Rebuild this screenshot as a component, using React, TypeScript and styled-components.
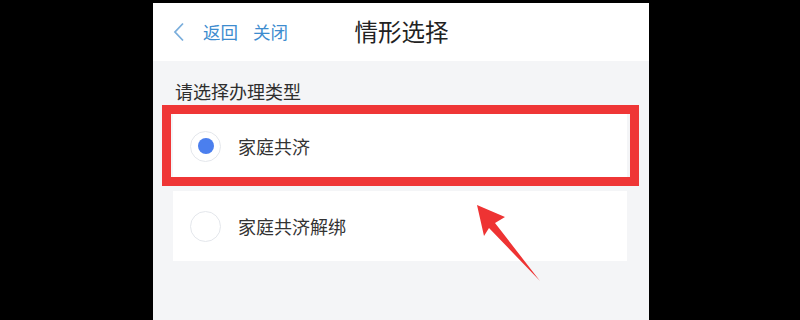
import styled, { createGlobalStyle } from 'styled-components';
import { useState } from 'react';

const GlobalStyle = createGlobalStyle`
  html, body {
    margin: 0;
    padding: 0;
    background: #000;
  }
  body {
    font-family: "Noto Sans CJK SC", "Noto Sans", sans-serif;
  }
`;

const Stage = styled.div`
  width: 800px;
  height: 320px;
  padding-top: 3px;
  box-sizing: border-box;
  background: #000;
  overflow: hidden;
`;

const Phone = styled.div`
  position: relative;
  margin-left: 153px;
  width: 496px;
  height: 317px;
  background: #f4f5f7;
  display: flex;
  flex-direction: column;
`;

const NavBar = styled.header`
  position: relative;
  height: 58px;
  background: #fff;
  display: flex;
  align-items: center;
  justify-content: center;
`;

const NavLeft = styled.div`
  position: absolute;
  left: 20px;
  top: 0;
  bottom: 0;
  display: flex;
  align-items: center;
`;

const NavLink = styled.span`
  font-size: 17.5px;
  color: #3d8ccf;
  margin-right: 15px;
  line-height: 1;
`;

const Chevron = styled.svg`
  width: 12px;
  height: 20px;
  margin-right: 18px;
`;

const Title = styled.h1`
  margin: 0 0 0 1px;
  font-size: 23.5px;
  font-weight: 400;
  color: #222;
  line-height: 1;
`;

const Body = styled.main`
  flex: 1;
  padding: 20px 22px 0 20px;
`;

const SectionLabel = styled.div`
  font-size: 18px;
  color: #2e2e2e;
  line-height: 20px;
  margin-left: 2px;
  margin-bottom: 10px;
`;

const OptionList = styled.div`
  display: flex;
  flex-direction: column;
  gap: 10px;
`;

const Option = styled.div`
  height: 70px;
  background: #fff;
  display: flex;
  align-items: center;
  padding-left: 17px;
  cursor: pointer;
`;

const Radio = styled.span<{ $checked: boolean }>`
  width: 31px;
  height: 31px;
  border-radius: 50%;
  border: 1.5px solid #e4e7ec;
  box-sizing: border-box;
  display: flex;
  align-items: center;
  justify-content: center;
  margin-right: 17px;

  &::after {
    content: '';
    width: 16px;
    height: 16px;
    border-radius: 50%;
    background: ${(p) => (p.$checked ? '#4b7fee' : 'transparent')};
  }
`;

const OptionText = styled.span`
  font-size: 18px;
  color: #333;
  line-height: 1;
`;

const Highlight = styled.div`
  position: absolute;
  left: 9px;
  top: 102px;
  width: 477px;
  height: 81px;
  border: 9px solid #ef3636;
  box-sizing: border-box;
  pointer-events: none;
`;

const Arrow = styled.svg`
  position: absolute;
  left: 320px;
  top: 198px;
  width: 70px;
  height: 82px;
  pointer-events: none;
`;

const options = ['家庭共济', '家庭共济解绑'];

const App: React.FC = () => {
  const [selected, setSelected] = useState(0);

  return (
    <Stage>
      <GlobalStyle />
      <Phone>
        <NavBar>
          <NavLeft>
            <Chevron viewBox="0 0 12 20">
              <polyline points="10,1.5 2,10 10,18.5" fill="none" stroke="#7aaedc" strokeWidth="1.8" />
            </Chevron>
            <NavLink>返回</NavLink>
            <NavLink>关闭</NavLink>
          </NavLeft>
          <Title>情形选择</Title>
        </NavBar>
        <Body>
          <SectionLabel>请选择办理类型</SectionLabel>
          <OptionList>
            {options.map((label, i) => (
              <Option key={label} onClick={() => setSelected(i)}>
                <Radio $checked={selected === i} />
                <OptionText>{label}</OptionText>
              </Option>
            ))}
          </OptionList>
        </Body>
        {/* red annotation over the first option */}
        <Highlight />
        <Arrow viewBox="0 0 70 82">
          <polygon points="4,4 32,16 22,22 67,80 16,27 11,35" fill="#ee3333" />
        </Arrow>
      </Phone>
    </Stage>
  );
};

export default App;
